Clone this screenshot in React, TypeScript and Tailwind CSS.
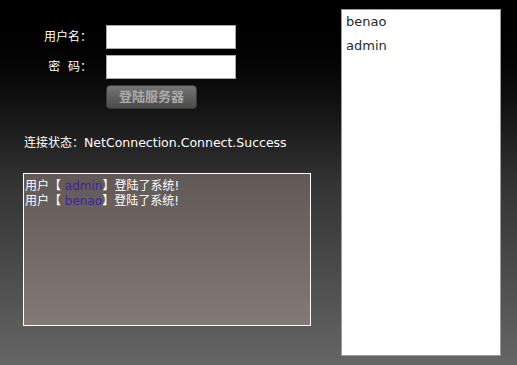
import React from "react";

export default function App() {
  const font = { fontFamily: '"DejaVu Sans", "Noto Sans CJK SC", sans-serif' };
  return (
    <div
      className="w-[517px] h-[365px] flex bg-gradient-to-b from-black via-[#333333] to-[#666666] overflow-hidden"
      style={font}
    >
      <div className="w-[341px] flex flex-col">
        <div className="pt-[25px] flex flex-col">
          <div className="flex items-center h-[24px]">
            <div className="w-[106px] pr-[14px] text-right text-white text-[12px]">用户名：</div>
            <div className="w-[130px] h-[24px] bg-white border border-[#a9a9a9]" />
          </div>
          <div className="flex items-center h-[24px] mt-[6px]">
            <div className="w-[106px] pr-[14px] text-right text-white text-[12px]">密&nbsp;&nbsp;码：</div>
            <div className="w-[130px] h-[24px] bg-white border border-[#a9a9a9]" />
          </div>
          <div className="mt-[6px] ml-[106px] w-[91px] h-[24px] rounded-[4px] bg-gradient-to-b from-[#757575] to-[#4b4b4b] border border-[#3a3a3a] flex items-center justify-center text-[13px] font-bold text-[#aaaaaa]">
            登陆服务器
          </div>
        </div>
        <div className="mt-[26px] ml-[24px] text-white text-[12px] leading-[16px]">
          连接状态：<span className="text-[12.5px]">NetConnection.Connect.Success</span>
        </div>
        <div className="mt-[22px] ml-[23px] w-[288px] h-[153px] border border-white bg-gradient-to-b from-[#615956] to-[#827a77] px-[1px] pt-[5px] text-white text-[12px] leading-[15px]">
          <div>
            用户【 <span className="text-[#3c22a8]">admin</span>】登陆了系统!
          </div>
          <div>
            用户【 <span className="text-[#3c22a8]">benao</span>】登陆了系统!
          </div>
        </div>
      </div>
      <div className="mt-[9px] w-[160px] h-[347px] bg-white border border-[#9a9a9a] pl-[4px] pt-0 text-[13px] leading-[24px] text-[#1d2b2b]">
        <div>benao</div>
        <div>admin</div>
      </div>
    </div>
  );
}
